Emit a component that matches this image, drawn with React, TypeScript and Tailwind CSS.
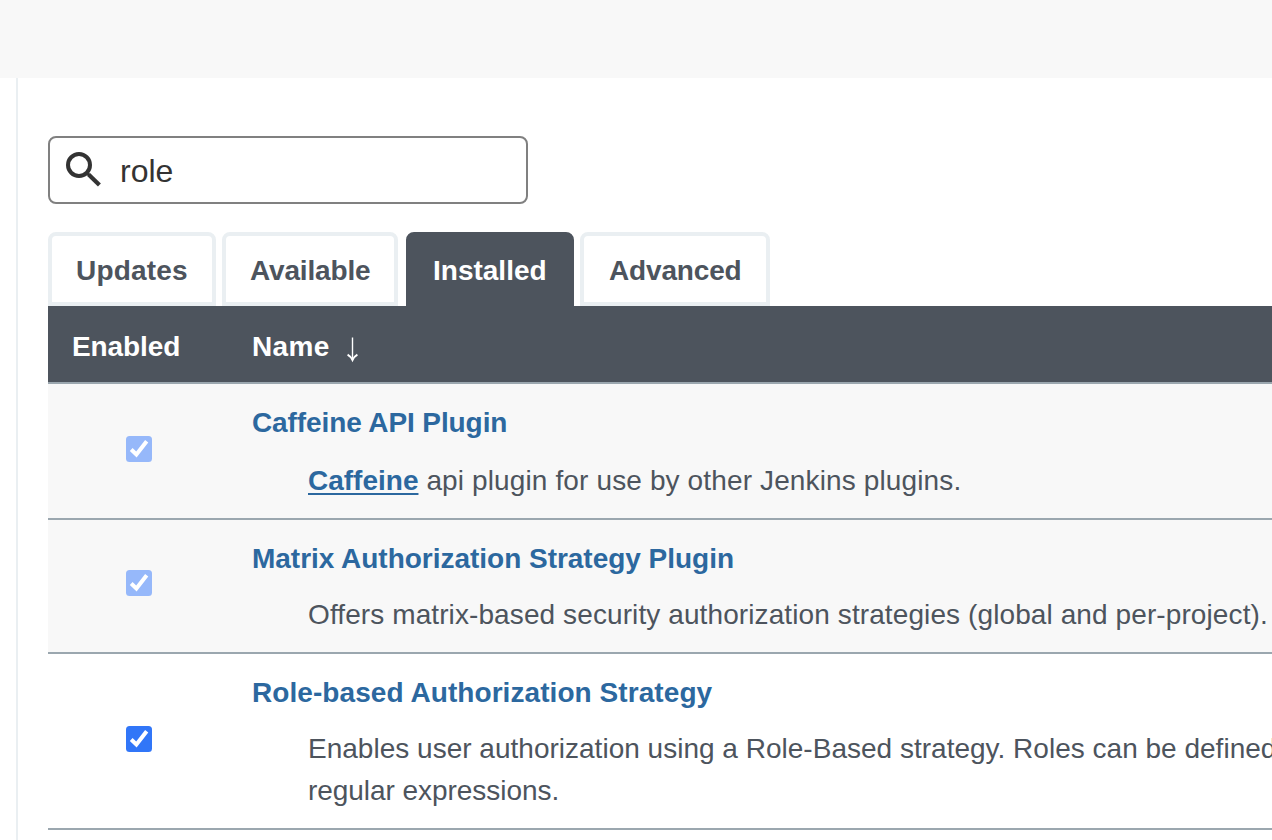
import type { ReactNode } from "react";

function Checkbox({ className, fill }: { className: string; fill: string }) {
  return (
    <div className={`w-[182px] shrink-0 pl-[78px] ${className}`}>
      <svg width="26" height="26" viewBox="0 0 26 26" role="checkbox" aria-checked="true">
        <rect width="26" height="26" rx="3.5" fill={fill} />
        <path d="M5.2 13.5 L10.4 18.5 L20.7 5.2" fill="none" stroke="#fff" strokeWidth="4" />
      </svg>
    </div>
  );
}

function Tab({ className, children }: { className: string; children: ReactNode }) {
  return (
    <button
      className={`h-[74px] shrink-0 rounded-t-lg border-4 text-left font-bold leading-[68px] whitespace-nowrap ${className}`}
    >
      <span className="block h-[66px] pt-px">{children}</span>
    </button>
  );
}

function Row({ className, check, children }: { className: string; check: ReactNode; children: ReactNode }) {
  return (
    <div className={`flex border-b-2 border-[#9ba7af] ${className}`}>
      {check}
      <div className="pl-[22px] pt-[18px] leading-[42px] whitespace-nowrap">{children}</div>
    </div>
  );
}

export default function App() {
  return (
    <div className="flex h-[840px] w-[1272px] flex-col overflow-hidden bg-white font-['Liberation_Sans',Arial,sans-serif] text-[28px] text-[#4d545d]">
      <header className="h-[78px] shrink-0 bg-[#f8f8f8]" />
      <main className="ml-4 flex-1 border-l-2 border-[#eaeff2] pl-[30px] pt-[58px]">
        <div className="flex h-[68px] w-[480px] rounded-lg border-2 border-[#808080] text-[#333]">
          <svg className="ml-4 mt-3.5 shrink-0" width="36" height="36" viewBox="0 0 36 36" fill="none" stroke="#333">
            <circle cx="13" cy="13" r="11" strokeWidth="4" />
            <path d="M21 21 L23.5 23.5" strokeWidth="3" />
            <path d="M22.6 22.4 L33.4 33" strokeWidth="4.2" />
          </svg>
          <span className="ml-[18px] text-[32px] leading-[66px]">role</span>
        </div>
        <nav className="mt-7 flex">
          <Tab className="mr-1.5 w-[168px] border-[#eaeff2] pl-6 tracking-[0.18px]">Updates</Tab>
          <Tab className="mr-2 w-[176px] border-[#eaeff2] pl-6 tracking-[-0.16px]">Available</Tab>
          <Tab className="mr-1.5 w-[168px] border-[#4d545d] bg-[#4d545d] pl-[23px] text-white">Installed</Tab>
          <Tab className="w-[190px] border-[#eaeff2] pl-[25px] tracking-[-0.16px]">Advanced</Tab>
        </nav>
        <section>
          <div className="flex h-[78px] border-b-2 border-[#9ba7af] bg-[#4d545d] pl-6 font-bold leading-[82px] text-white">
            <span className="w-[180px] tracking-[-0.1px]">Enabled</span>
            <span className="w-[94px] tracking-[0.35px]">Name</span>
            <svg className="mt-[31px]" width="13" height="26" viewBox="0 0 13 26" fill="none" stroke="#fff">
              <path d="M6.5 0.5 V22.5" strokeWidth="1.4" />
              <path d="M1.6 17.6 Q5 19.6 6.5 23 Q8 19.6 11.4 17.6" strokeWidth="1.9" />
            </svg>
          </div>
          <Row className="h-[136px] bg-[#f8f8f8]" check={<Checkbox className="pt-[52px]" fill="#96b8fa" />}>
            <div className="font-bold tracking-[-0.1px] text-[#2c689f]">Caffeine API Plugin</div>
            <div className="mt-4 pl-14">
              <a className="font-bold text-[#2c689f] underline decoration-2 underline-offset-[3px]">Caffeine</a>
              <span className="tracking-[0.13px]"> api plugin for use by other Jenkins plugins.</span>
            </div>
          </Row>
          <Row className="h-[134px] bg-[#f8f8f8]" check={<Checkbox className="pt-[50px]" fill="#96b8fa" />}>
            <div className="font-bold tracking-[-0.02px] text-[#2c689f]">Matrix Authorization Strategy Plugin</div>
            <div className="mt-3.5 pl-14 tracking-[0.1px]">
              Offers matrix-based security authorization strategies (global and per-project).
            </div>
          </Row>
          <Row className="h-[176px]" check={<Checkbox className="pt-[72px]" fill="#3176f8" />}>
            <div className="font-bold tracking-[0.07px] text-[#2c689f]">Role-based Authorization Strategy</div>
            <div className="mt-3.5 pl-14 tracking-[0.01px]">
              Enables user authorization using a Role-Based strategy. Roles can be defined
              <br />
              <span className="tracking-[-0.05px]">regular expressions.</span>
            </div>
          </Row>
        </section>
      </main>
    </div>
  );
}
